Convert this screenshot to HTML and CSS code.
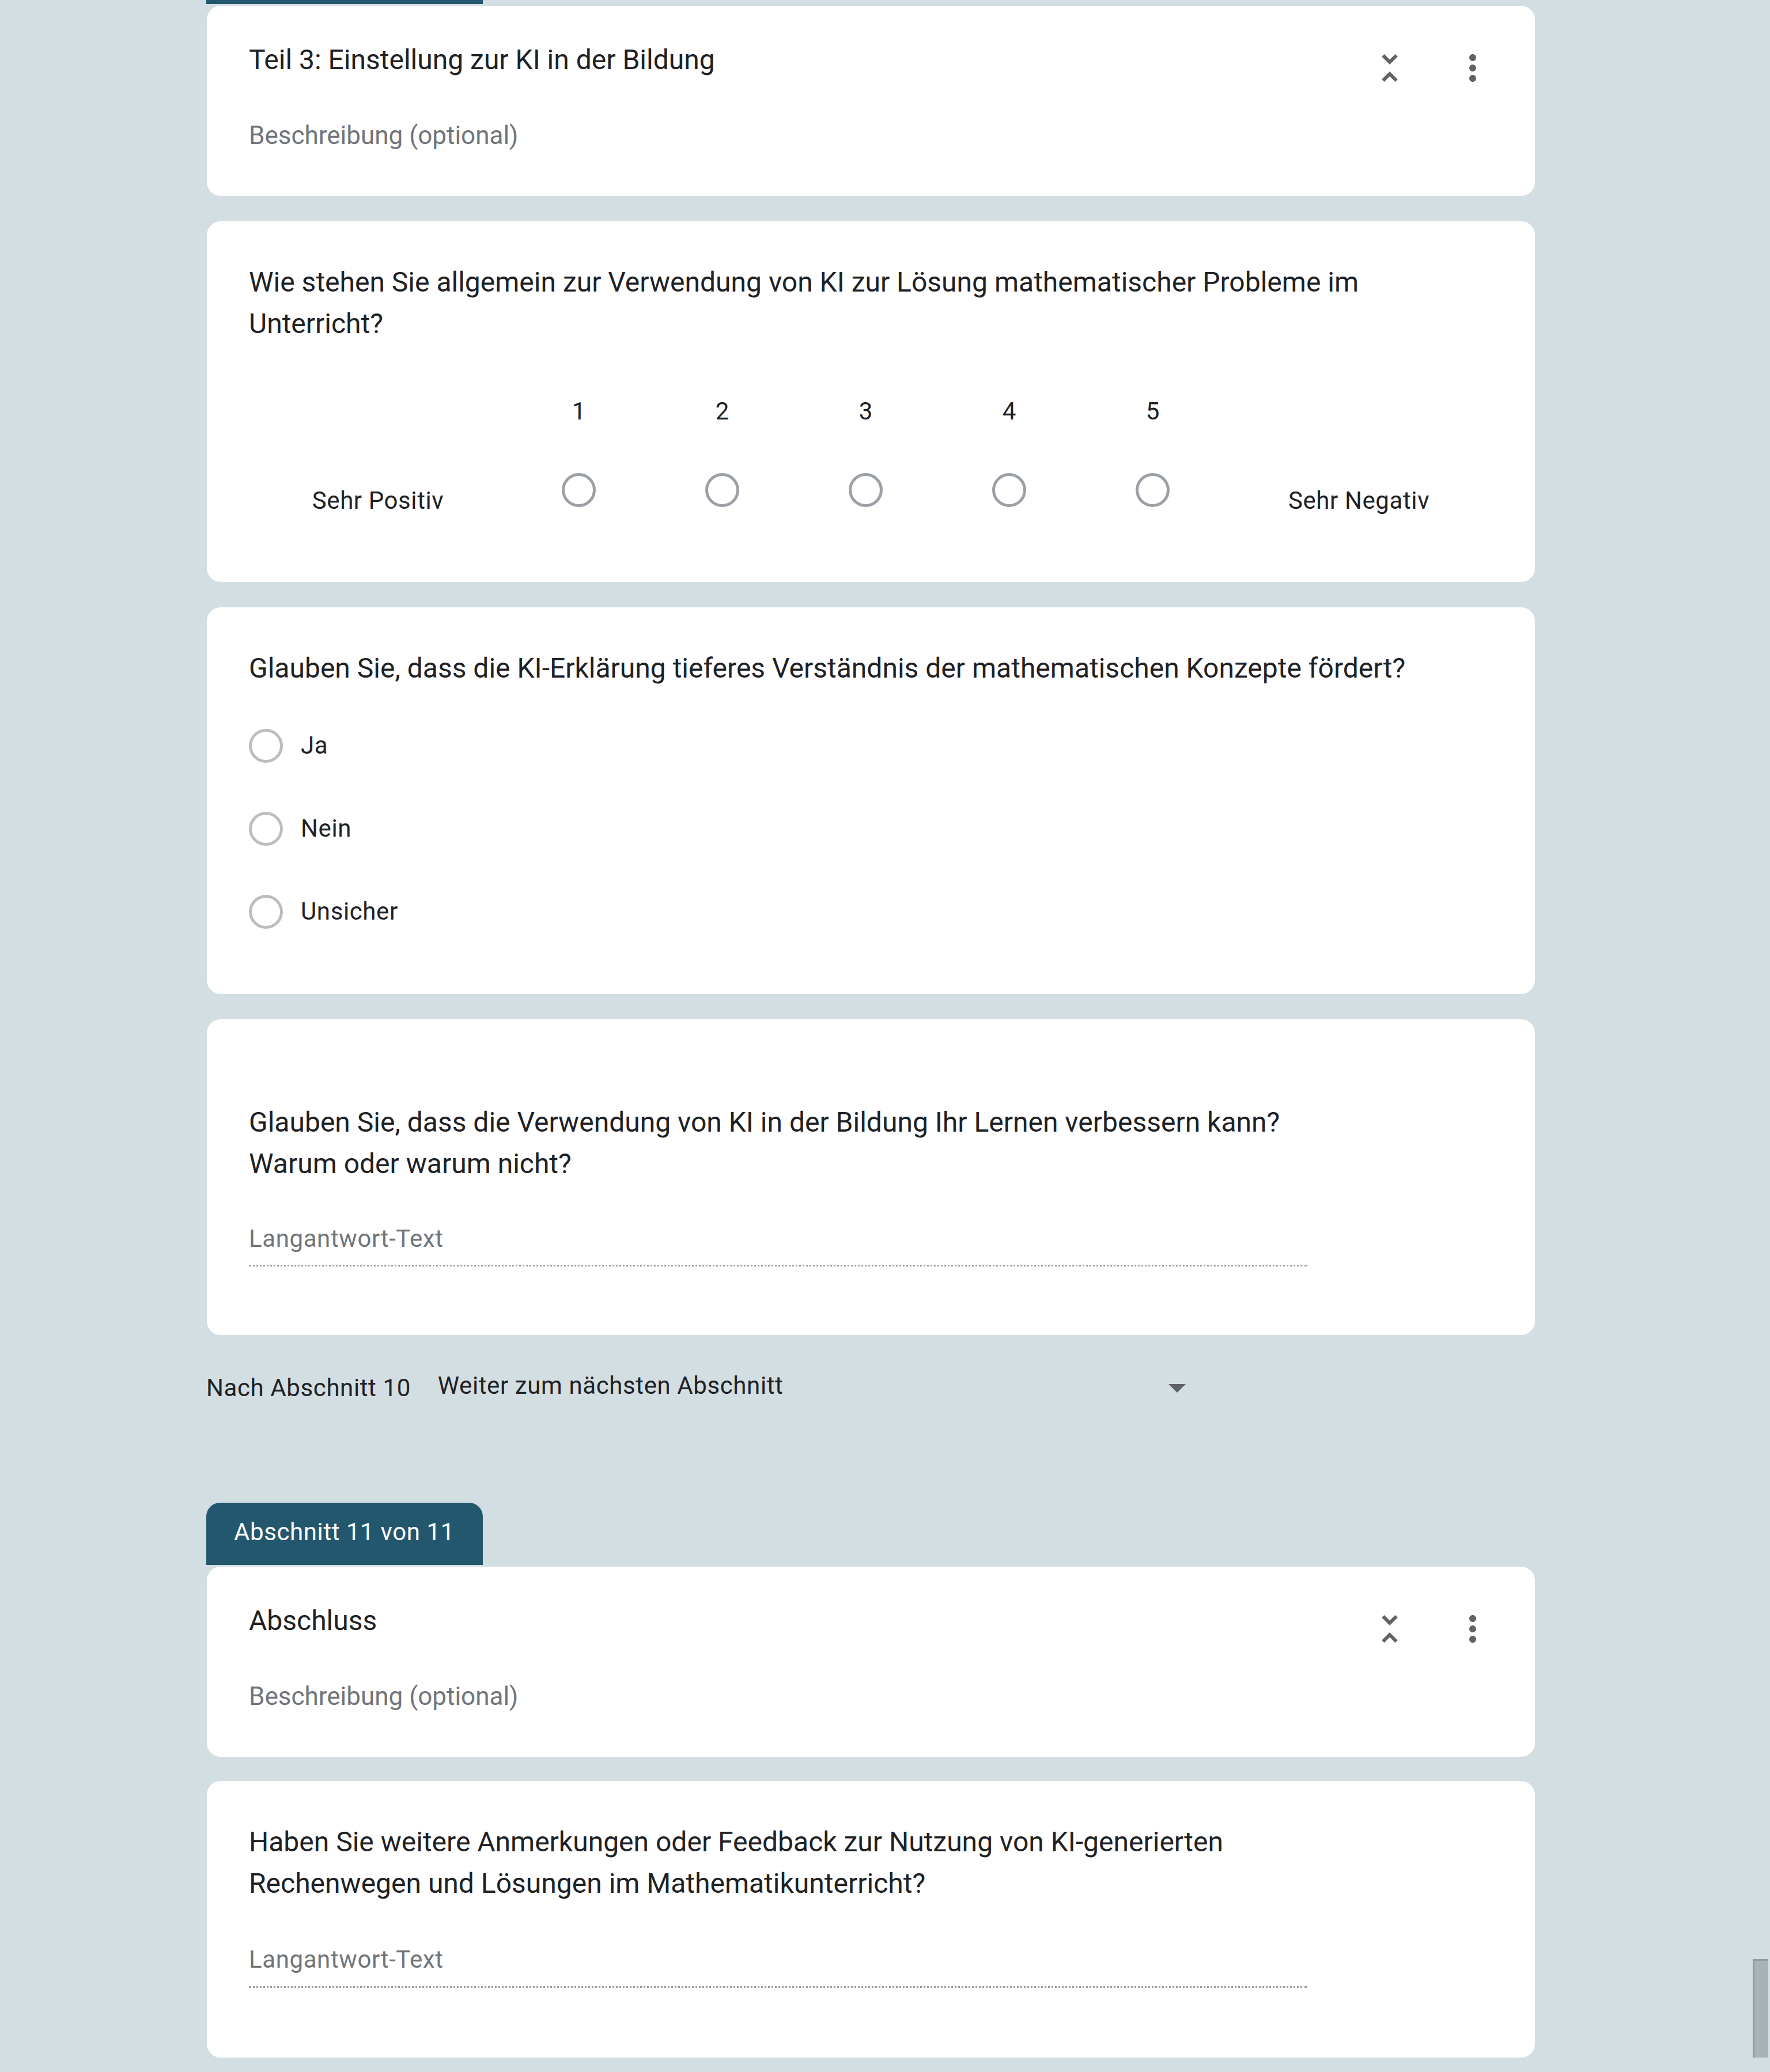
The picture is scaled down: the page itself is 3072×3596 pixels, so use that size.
FILE: index.html
```html
<!DOCTYPE html>
<html lang="de">
<head>
<meta charset="utf-8">
<title>Formular – Abschnitte</title>
<link rel="stylesheet" href="styles.css">
</head>
<body>
<div class="form">
  <div class="tab tab-cut"></div>

  <section class="card head-card first">
    <div class="head-row">
      <div class="sec-title">Teil 3: Einstellung zur KI in der Bildung</div>
      <div class="icons">
        <svg class="icon" viewBox="0 0 24 24" width="72" height="72"><path d="M7.41 18.59L8.83 20 12 16.83 15.17 20l1.41-1.41L12 14l-4.59 4.59zm9.18-13.18L15.17 4 12 7.17 8.83 4 7.41 5.41 12 10l4.59-4.59z"/></svg>
        <svg class="icon" viewBox="0 0 24 24" width="72" height="72"><path d="M12 8c1.1 0 2-.9 2-2s-.9-2-2-2-2 .9-2 2 .9 2 2 2zm0 2c-1.1 0-2 .9-2 2s.9 2 2 2 2-.9 2-2-.9-2-2-2zm0 6c-1.1 0-2 .9-2 2s.9 2 2 2 2-.9 2-2-.9-2-2-2z"/></svg>
      </div>
    </div>
    <div class="sec-desc">Beschreibung (optional)</div>
  </section>

  <section class="card q-card scale-card">
    <div class="q-title">Wie stehen Sie allgemein zur Verwendung von KI zur Lösung mathematischer Probleme im<br>Unterricht?</div>
    <div class="scale">
      <div class="scale-label left">Sehr Positiv</div>
      <div class="scale-col"><div class="num">1</div><span class="radio scale-radio"></span></div>
      <div class="scale-col"><div class="num">2</div><span class="radio scale-radio"></span></div>
      <div class="scale-col"><div class="num">3</div><span class="radio scale-radio"></span></div>
      <div class="scale-col"><div class="num">4</div><span class="radio scale-radio"></span></div>
      <div class="scale-col"><div class="num">5</div><span class="radio scale-radio"></span></div>
      <div class="scale-label right">Sehr Negativ</div>
    </div>
  </section>

  <section class="card q-card mc-card">
    <div class="q-title">Glauben Sie, dass die KI-Erklärung tieferes Verständnis der mathematischen Konzepte fördert?</div>
    <div class="options">
      <div class="opt"><span class="radio opt-radio"></span><span class="opt-text">Ja</span></div>
      <div class="opt"><span class="radio opt-radio"></span><span class="opt-text">Nein</span></div>
      <div class="opt"><span class="radio opt-radio"></span><span class="opt-text">Unsicher</span></div>
    </div>
  </section>

  <section class="card q-card para-card tall">
    <div class="q-title">Glauben Sie, dass die Verwendung von KI in der Bildung Ihr Lernen verbessern kann?<br>Warum oder warum nicht?</div>
    <div class="answer"><span class="placeholder">Langantwort-Text</span></div>
  </section>

  <div class="after-row">
    <div class="after-label">Nach Abschnitt 10</div>
    <div class="after-select">
      <span class="after-value">Weiter zum nächsten Abschnitt</span>
      <span class="caret"></span>
    </div>
  </div>

  <div class="tab tab-label">Abschnitt 11 von 11</div>

  <section class="card head-card after-tab">
    <div class="head-row">
      <div class="sec-title">Abschluss</div>
      <div class="icons">
        <svg class="icon" viewBox="0 0 24 24" width="72" height="72"><path d="M7.41 18.59L8.83 20 12 16.83 15.17 20l1.41-1.41L12 14l-4.59 4.59zm9.18-13.18L15.17 4 12 7.17 8.83 4 7.41 5.41 12 10l4.59-4.59z"/></svg>
        <svg class="icon" viewBox="0 0 24 24" width="72" height="72"><path d="M12 8c1.1 0 2-.9 2-2s-.9-2-2-2-2 .9-2 2 .9 2 2 2zm0 2c-1.1 0-2 .9-2 2s.9 2 2 2 2-.9 2-2-.9-2-2-2zm0 6c-1.1 0-2 .9-2 2s.9 2 2 2 2-.9 2-2-.9-2-2-2z"/></svg>
      </div>
    </div>
    <div class="sec-desc">Beschreibung (optional)</div>
  </section>

  <section class="card q-card para-card last">
    <div class="q-title">Haben Sie weitere Anmerkungen oder Feedback zur Nutzung von KI-generierten<br>Rechenwegen und Lösungen im Mathematikunterricht?</div>
    <div class="answer"><span class="placeholder">Langantwort-Text</span></div>
  </section>
</div>
<div class="scroll-thumb"></div>
</body>
</html>
```

FILE: styles.css
```css
html, body {
  margin: 0;
  padding: 0;
}

body {
  position: relative;
  background: #d3dee3;
  font-family: Roboto, "Noto Sans", "Liberation Sans", sans-serif;
  color: #202124;
  overflow: hidden;
}

.form {
  width: 2306px;
  margin-left: 358px;
}

/* Section tabs */
.tab {
  background: #23576e;
  width: 480px;
  box-sizing: border-box;
}

.tab-cut {
  height: 7px;
}

.tab-label {
  height: 108px;
  margin-top: 169px;
  padding: 21px 0 0 48px;
  border-radius: 24px 24px 0 0;
  color: #ffffff;
  font-size: 42px;
  line-height: 60px;
  letter-spacing: 0.6px;
}

/* Cards */
.card {
  background: #ffffff;
  border-radius: 24px;
  margin-left: 1px;
  padding: 0 72px 0 73px;
  margin-top: 44px;
}

.card.first,
.card.after-tab {
  margin-top: 3px;
}

.card.last {
  margin-top: 42px;
}

.head-card {
  padding-top: 58px;
  padding-bottom: 75px;
}

.head-row {
  display: flex;
  align-items: flex-start;
}

.sec-title {
  flex: 1;
  font-size: 48px;
  line-height: 72px;
}

.icons {
  display: flex;
  gap: 72px;
  margin-top: 14px;
}

.icon {
  display: block;
  fill: #5f6368;
}

.sec-desc {
  margin-top: 51px;
  font-size: 44px;
  line-height: 60px;
  color: #70757a;
}

/* Questions */
.q-card {
  padding-top: 70px;
}

.q-title {
  font-size: 48px;
  line-height: 72px;
}

/* Linear scale */
.scale-card {
  padding-bottom: 111px;
}

.scale {
  display: flex;
  align-items: flex-start;
  margin-top: 86px;
}

.scale-label {
  padding-top: 155px;
  font-size: 42px;
  line-height: 60px;
  letter-spacing: 0.6px;
  text-align: center;
}

.scale-label.left {
  width: 448px;
}

.scale-label.right {
  flex: 1;
}

.scale-col {
  width: 249px;
  display: flex;
  flex-direction: column;
  align-items: center;
}

.num {
  font-size: 42px;
  line-height: 60px;
}

.radio {
  display: block;
  width: 59px;
  height: 59px;
  box-sizing: border-box;
  border-radius: 50%;
  border: 5px solid #9aa0a6;
  flex: none;
}

.scale-radio {
  margin-top: 77px;
}

/* Multiple choice */
.mc-card {
  padding-bottom: 113px;
}

.options {
  margin-top: 68px;
}

.opt {
  display: flex;
  align-items: center;
  height: 60px;
}

.opt + .opt {
  margin-top: 84px;
}

.opt-radio {
  border-color: #bdbdbd;
}

.opt-text {
  margin-left: 31px;
  font-size: 42px;
  line-height: 60px;
  letter-spacing: 0.6px;
}

/* Paragraph answer */
.para-card {
  padding-bottom: 121px;
}

.para-card.tall {
  padding-top: 143px;
  padding-bottom: 119px;
}

.answer {
  width: 1836px;
  margin-top: 64px;
  padding-bottom: 15px;
  border-bottom: 3px dotted rgba(0, 0, 0, 0.38);
}

.para-card.last .answer {
  margin-top: 66px;
  padding-bottom: 16px;
}

.placeholder {
  display: block;
  font-size: 42px;
  line-height: 60px;
  letter-spacing: 0.6px;
  color: #70757a;
}

/* After section row */
.after-row {
  display: flex;
  align-items: flex-start;
  margin-top: 58px;
  font-size: 42px;
  line-height: 60px;
  letter-spacing: 0.6px;
}

.after-label {
  margin-top: 4px;
}

.after-select {
  margin-left: 47px;
  width: 1298px;
  display: flex;
  justify-content: space-between;
  align-items: flex-start;
}

.caret {
  width: 0;
  height: 0;
  margin-top: 27px;
  border-left: 15.5px solid transparent;
  border-right: 15.5px solid transparent;
  border-top: 15px solid #5f6368;
}

/* Overlay scrollbar thumb */
.scroll-thumb {
  position: absolute;
  top: 3400px;
  left: 3042px;
  width: 27px;
  height: 196px;
  box-sizing: border-box;
  background: #a9b2b5;
  border-left: 3px solid #939b9e;
  border-top: 3px solid #939b9e;
}
```
